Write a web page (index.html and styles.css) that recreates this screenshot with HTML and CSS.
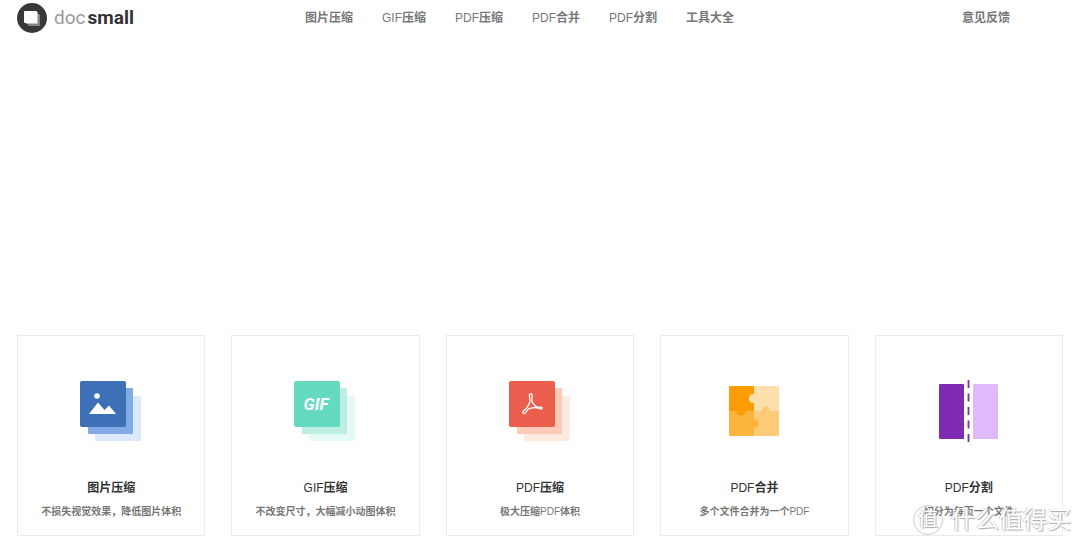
FILE: index.html
```html
<!DOCTYPE html>
<html lang="zh-CN">
<head>
<meta charset="utf-8">
<meta name="viewport" content="width=device-width, initial-scale=1">
<title>docsmall</title>
<link rel="stylesheet" href="styles.css">
</head>
<body>
<header class="header">
  <a class="logo" href="#" aria-label="docsmall">
    <svg class="logo-mark" viewBox="0 0 30 30" aria-hidden="true">
      <circle cx="15" cy="15" r="15" fill="#383838"/>
      <rect x="11" y="11" width="12" height="12" rx="1" fill="#858585"/>
      <rect x="9" y="9" width="12" height="12" rx="1" fill="#c4c4c4"/>
      <rect x="7" y="8" width="13" height="12" rx="1" fill="#fff"/>
    </svg>
    <span class="logo-doc">doc</span><span class="logo-small">small</span>
  </a>
  <nav class="nav">
    <a href="#">图片压缩</a>
    <a href="#"><span class="latin">GIF</span>压缩</a>
    <a href="#"><span class="latin">PDF</span>压缩</a>
    <a href="#"><span class="latin">PDF</span>合并</a>
    <a href="#"><span class="latin">PDF</span>分割</a>
    <a href="#">工具大全</a>
  </nav>
  <a class="feedback" href="#">意见反馈</a>
</header>
<main>
  <section class="hero"></section>
  <section class="tools">
    <a class="card" href="#">
      <svg class="icon" viewBox="0 0 64 64" aria-hidden="true">
        <rect x="16" y="16" width="46" height="45" rx="1" fill="#dce9fc"/>
        <rect x="9" y="8" width="45" height="46" rx="1" fill="#82aae4"/>
        <rect x="1" y="1" width="46" height="46" rx="2" fill="#3d70b6"/>
        <circle cx="18" cy="16" r="2.8" fill="#fff"/>
        <path d="M10 34l9-11.500 6.500 7.500 4.500-4.500 7 8.500z" fill="#fff"/>
      </svg>
      <h2>图片压缩</h2>
      <p>不损失视觉效果，降低图片体积</p>
    </a>
    <a class="card" href="#">
      <svg class="icon" viewBox="0 0 64 64" aria-hidden="true">
        <rect x="15" y="16" width="46" height="45" rx="1" fill="#e5f9f5"/>
        <rect x="8" y="8" width="45" height="46" rx="1" fill="#bdeee3"/>
        <rect x="0" y="1" width="46" height="46" rx="2" fill="#65dac1"/>
        <text class="icon-text" x="22" y="30" text-anchor="middle">GIF</text>
      </svg>
      <h2><span class="latin">GIF</span>压缩</h2>
      <p>不改变尺寸，大幅减小动图体积</p>
    </a>
    <a class="card" href="#">
      <svg class="icon" viewBox="0 0 64 64" aria-hidden="true">
        <rect x="16" y="16" width="46" height="45" rx="1" fill="#feeadf"/>
        <rect x="9" y="8" width="45" height="46" rx="1" fill="#fdcbb7"/>
        <rect x="1" y="1" width="46" height="46" rx="2" fill="#eb5e4d"/>
        <path d="M21.500 14.500q1.500-1.500 2.500 0c.5 2-.5 4.500 0 7 1 2.500 3 4.500 5 5.500 2 .5 4-.5 5 .5q.5 1.500-1 1.500c-2 0-3.500-1.500-5.500-1.500-2.500 0-5 .5-7 1.500-2 1.500-2.500 4-4.500 4.500q-1.500 0-1.500-1.500c1-2 3.500-2.500 4.500-4.500 1.500-2 2.500-4 3-6 0-2.500-1-5-.5-7z" fill="none" stroke="#fff" stroke-width="1.300" stroke-linejoin="round"/>
      </svg>
      <h2><span class="latin">PDF</span>压缩</h2>
      <p>极大压缩<span class="latin">PDF</span>体积</p>
    </a>
    <a class="card" href="#">
      <svg class="icon" viewBox="0 0 64 64" aria-hidden="true">
        <path d="M7 6h25v25H7z" fill="#fe9c05"/>
        <path d="M32 6h24q1 0 1 1v24H32z" fill="#ffdfac"/>
        <path d="M7 31h25v25H8q-1 0-1-1z" fill="#fdb43e"/>
        <path d="M32 31h25v24q0 1-1 1H32z" fill="#fdca77"/>
        <path d="M32.500 14.500c-2-1.500-5.500 0-5.500 4s3.500 5.500 5.500 4z" fill="#ffdfac"/>
        <path d="M14 30.500c2 1-.5 5 5 5s3-4 5-5z" fill="#fe9c05"/>
        <path d="M39 31.500c2-1-.5-5 5-5s3 4 5 5z" fill="#fdca77"/>
        <path d="M31.500 38.500c1 2 5-.5 5 5s-4 3-5 5z" fill="#fdb43e"/>
      </svg>
      <h2><span class="latin">PDF</span>合并</h2>
      <p>多个文件合并为一个<span class="latin">PDF</span></p>
    </a>
    <a class="card" href="#">
      <svg class="icon" viewBox="0 0 64 64" aria-hidden="true">
        <rect x="2" y="4" width="25" height="55" rx="1" fill="#7e2bb1"/>
        <rect x="36" y="4" width="25" height="55" rx="1" fill="#e0b9fc"/>
        <path d="M31.500 0v62" stroke="#7e2bb1" stroke-width="1.800" stroke-dasharray="8 5.500"/>
      </svg>
      <h2><span class="latin">PDF</span>分割</h2>
      <p>切分为每页一个文件</p>
    </a>
  </section>
</main>
<div class="watermark"><span class="watermark-badge">值</span><span>什么值得买</span></div>
</body>
</html>
```
FILE: styles.css
```css
* {
  box-sizing: border-box;
}

body {
  margin: 0;
  background: #fff;
  color: #333;
  font-family: "Liberation Sans", "Noto Sans CJK SC", sans-serif;
  font-size: 12px;
  position: relative;
}

a {
  color: inherit;
  text-decoration: none;
}

.latin {
  font-weight: 400;
}

.header {
  display: flex;
  align-items: center;
  padding: 3px 70px 3px 17px;
  color: #777;
  font-weight: 700;
  line-height: 30px;
}

.logo {
  display: flex;
  align-items: center;
  width: 288px;
  font-family: Roboto, sans-serif;
  font-size: 19px;
}

.logo-mark {
  width: 30px;
  height: 30px;
  margin-right: 7px;
}

.logo-doc {
  margin-right: 2px;
  color: #999;
  font-weight: 400;
}

.logo-small {
  color: #333;
  font-weight: 700;
}

.nav {
  display: flex;
  gap: 29px;
}

.feedback {
  margin-left: auto;
}

.hero {
  min-height: 299px;
}

.tools {
  display: grid;
  grid-template-columns: repeat(5, 1fr);
  gap: 26px;
  padding: 0 17px 10px;
}

.card {
  display: flex;
  flex-direction: column;
  align-items: center;
  padding: 44px 8px 14px;
  border: 1px solid #ebebeb;
  text-align: center;
}

.icon {
  width: 64px;
  height: 64px;
}

.icon-text {
  fill: #fff;
  font: italic 700 17px Roboto, sans-serif;
}

.card h2 {
  margin: 35px 0 6px;
  font-size: 12px;
  font-weight: 700;
  line-height: 18px;
}

.card p {
  margin: 0;
  color: #777;
  font-size: 10px;
  font-weight: 700;
  line-height: 18px;
}

.watermark {
  position: absolute;
  right: 9px;
  bottom: 11px;
  display: flex;
  align-items: center;
  gap: 8px;
  color: #fff;
  font-size: 24px;
  line-height: 30px;
  text-shadow: 1px 1px 1px #aaa, -1px 0 1px #ccc;
}

.watermark-badge {
  width: 30px;
  height: 30px;
  border: 1px solid #ccc;
  border-radius: 50%;
  font-size: 20px;
  line-height: 27px;
  text-align: center;
}
```
